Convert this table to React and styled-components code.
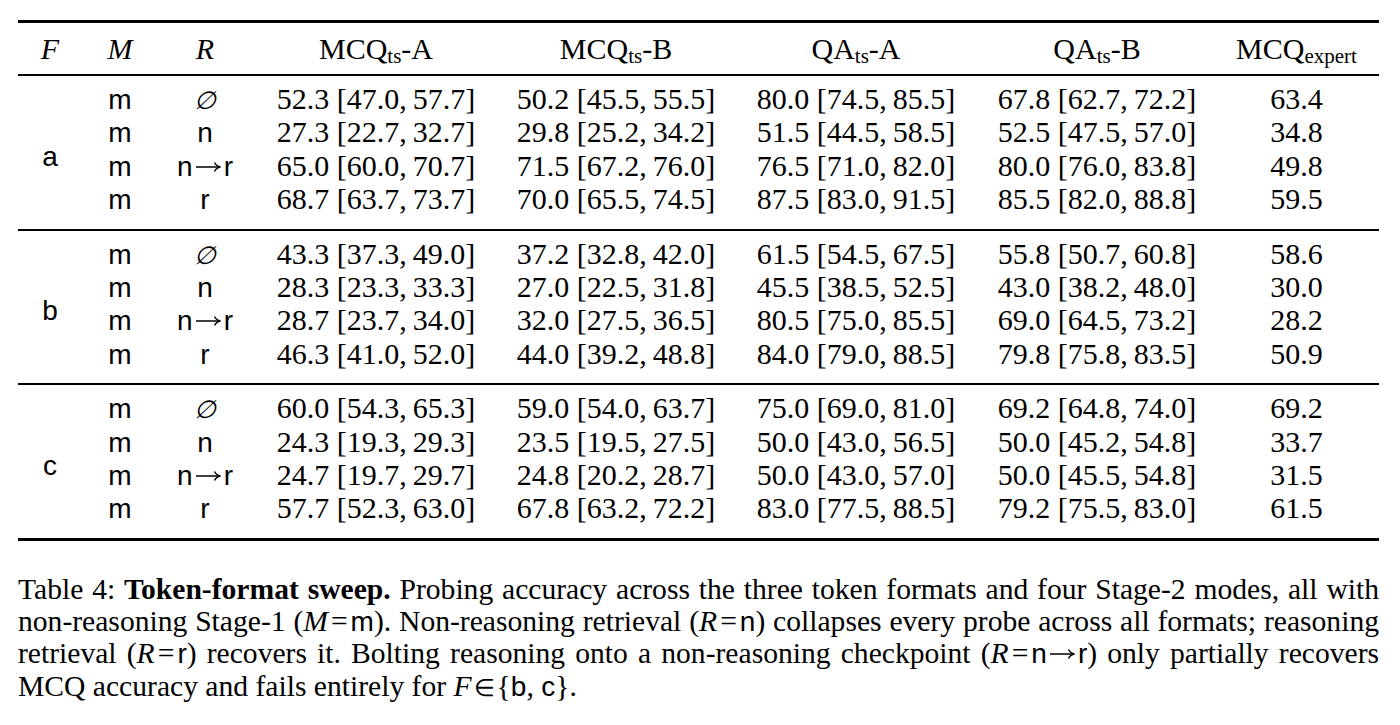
import React from 'react'
import styled, { createGlobalStyle } from 'styled-components'

const GlobalStyle = createGlobalStyle`
  body {
    margin: 0;
    background: #fff;
    color: #000;
    font-family: "Liberation Serif", "Times New Roman", serif;
  }
`

const Page = styled.div`
  width: 1361px;
  padding: 20px 0 0 18px;
`

const Table = styled.table`
  width: 1361px;
  border-collapse: collapse;
  table-layout: fixed;
  font-size: 30px;
  border-top: 3px solid #000;
  border-bottom: 3px solid #000;
`

const Head = styled.thead`
  border-bottom: 2px solid #000;
`

const Group = styled.tbody`
  border-top: 2px solid #000;
  tr:first-child td {
    padding-top: 6px;
  }
  tr:last-child td {
    padding-bottom: 13px;
  }
`

const Th = styled.th`
  font-weight: normal;
  height: 51px;
  padding: 0;
  text-align: center;
  vertical-align: middle;
  white-space: nowrap;
  line-height: 30px;
`

const Td = styled.td`
  padding: 0;
  height: 33.4px;
  line-height: 33.4px;
  text-align: center;
  vertical-align: middle;
  white-space: nowrap;
`

const Var = styled.i`
  font-family: "Liberation Serif", serif;
  font-style: italic;
`

const Sf = styled.span`
  font-family: "Liberation Sans", Arial, sans-serif;
  font-size: 28px;
  line-height: 20px;
`

const Sub = styled.sub`
  font-size: 21px;
  vertical-align: -4px;
  line-height: 0;
`

const Empty = styled.span`
  font-style: italic;
  font-family: "DejaVu Serif", serif;
  font-size: 25px;
  line-height: 20px;
`

const Caption = styled.div`
  margin-top: 32px;
  font-size: 29.6px;
  line-height: 32.3px;
`

const Line = styled.div`
  text-align: justify;
  text-align-last: ${p => (p.last ? 'left' : 'justify')};
  white-space: nowrap;
`

const Rel = styled.span`
  margin: 0 ${p => p.gap || 3}px;
  font-size: ${p => p.size || 'inherit'};
`

const ArrowSvg = styled.svg`
  width: 27px;
  height: 12px;
  margin: 0 2px;
  vertical-align: 3px;
`

const Arrow = () => (
  <ArrowSvg viewBox="0 0 27 12" aria-label="→">
    <path d="M1 6H25" stroke="#000" strokeWidth="1.5" fill="none" />
    <path d="M19.5 1.5C20.5 3.8 22.5 5.3 25.5 6C22.5 6.7 20.5 8.2 19.5 10.5" stroke="#000" strokeWidth="1.4" fill="none" />
  </ArrowSvg>
)

const cols = [64, 76, 94, 248, 232, 248, 234, 165]

const heads = [
  ['MCQ', 'ts', '-A'],
  ['MCQ', 'ts', '-B'],
  ['QA', 'ts', '-A'],
  ['QA', 'ts', '-B'],
  ['MCQ', 'expert', ''],
]

const R = ({ r }) => {
  if (r === 'none') return <Empty>∅</Empty>
  if (r === 'nr') return <Sf>n<Arrow />r</Sf>
  return <Sf>{r}</Sf>
}

const modes = ['none', 'n', 'nr', 'r']

const data = {
  a: [
    [[52.3, 47.0, 57.7], [50.2, 45.5, 55.5], [80.0, 74.5, 85.5], [67.8, 62.7, 72.2], 63.4],
    [[27.3, 22.7, 32.7], [29.8, 25.2, 34.2], [51.5, 44.5, 58.5], [52.5, 47.5, 57.0], 34.8],
    [[65.0, 60.0, 70.7], [71.5, 67.2, 76.0], [76.5, 71.0, 82.0], [80.0, 76.0, 83.8], 49.8],
    [[68.7, 63.7, 73.7], [70.0, 65.5, 74.5], [87.5, 83.0, 91.5], [85.5, 82.0, 88.8], 59.5],
  ],
  b: [
    [[43.3, 37.3, 49.0], [37.2, 32.8, 42.0], [61.5, 54.5, 67.5], [55.8, 50.7, 60.8], 58.6],
    [[28.3, 23.3, 33.3], [27.0, 22.5, 31.8], [45.5, 38.5, 52.5], [43.0, 38.2, 48.0], 30.0],
    [[28.7, 23.7, 34.0], [32.0, 27.5, 36.5], [80.5, 75.0, 85.5], [69.0, 64.5, 73.2], 28.2],
    [[46.3, 41.0, 52.0], [44.0, 39.2, 48.8], [84.0, 79.0, 88.5], [79.8, 75.8, 83.5], 50.9],
  ],
  c: [
    [[60.0, 54.3, 65.3], [59.0, 54.0, 63.7], [75.0, 69.0, 81.0], [69.2, 64.8, 74.0], 69.2],
    [[24.3, 19.3, 29.3], [23.5, 19.5, 27.5], [50.0, 43.0, 56.5], [50.0, 45.2, 54.8], 33.7],
    [[24.7, 19.7, 29.7], [24.8, 20.2, 28.7], [50.0, 43.0, 57.0], [50.0, 45.5, 54.8], 31.5],
    [[57.7, 52.3, 63.0], [67.8, 63.2, 72.2], [83.0, 77.5, 88.5], [79.2, 75.5, 83.0], 61.5],
  ],
}

const f = n => n.toFixed(1)
const ci = ([v, lo, hi]) => `${f(v)} [${f(lo)},\u2009${f(hi)}]`

export default function App() {
  return (
    <Page>
      <GlobalStyle />
      <Table>
        <colgroup>
          {cols.map((w, i) => <col key={i} style={{ width: w }} />)}
        </colgroup>
        <Head>
          <tr>
            <Th><Var>F</Var></Th>
            <Th><Var>M</Var></Th>
            <Th><Var>R</Var></Th>
            {heads.map(([a, s, b]) => (
              <Th key={a + s + b}>{a}<Sub>{s}</Sub>{b}</Th>
            ))}
          </tr>
        </Head>
        {Object.entries(data).map(([fmt, rows]) => (
          <Group key={fmt}>
            {rows.map((row, i) => (
              <tr key={i}>
                {i === 0 && <Td rowSpan={4}><Sf>{fmt}</Sf></Td>}
                <Td><Sf>m</Sf></Td>
                <Td><R r={modes[i]} /></Td>
                {row.slice(0, 4).map((c, j) => <Td key={j}>{ci(c)}</Td>)}
                <Td>{f(row[4])}</Td>
              </tr>
            ))}
          </Group>
        ))}
      </Table>
      <Caption>
        <Line>Table 4: <b>Token-format sweep.</b> Probing accuracy across the three token formats and four Stage-2 modes, all with</Line>
        <Line>non-reasoning Stage-1 (<Var>M</Var><Rel>=</Rel><Sf>m</Sf>). Non-reasoning retrieval (<Var>R</Var><Rel>=</Rel><Sf>n</Sf>) collapses every probe across all formats; reasoning</Line>
        <Line>retrieval (<Var>R</Var><Rel>=</Rel><Sf>r</Sf>) recovers it. Bolting reasoning onto a non-reasoning checkpoint (<Var>R</Var><Rel>=</Rel><Sf>n<Arrow />r</Sf>) only partially recovers</Line>
        <Line last>MCQ accuracy and fails entirely for <Var>F</Var><Rel gap={2} size="24px">∈</Rel>{'{'}<Sf>b</Sf>, <Sf>c</Sf>{'}'}.</Line>
      </Caption>
    </Page>
  )
}
